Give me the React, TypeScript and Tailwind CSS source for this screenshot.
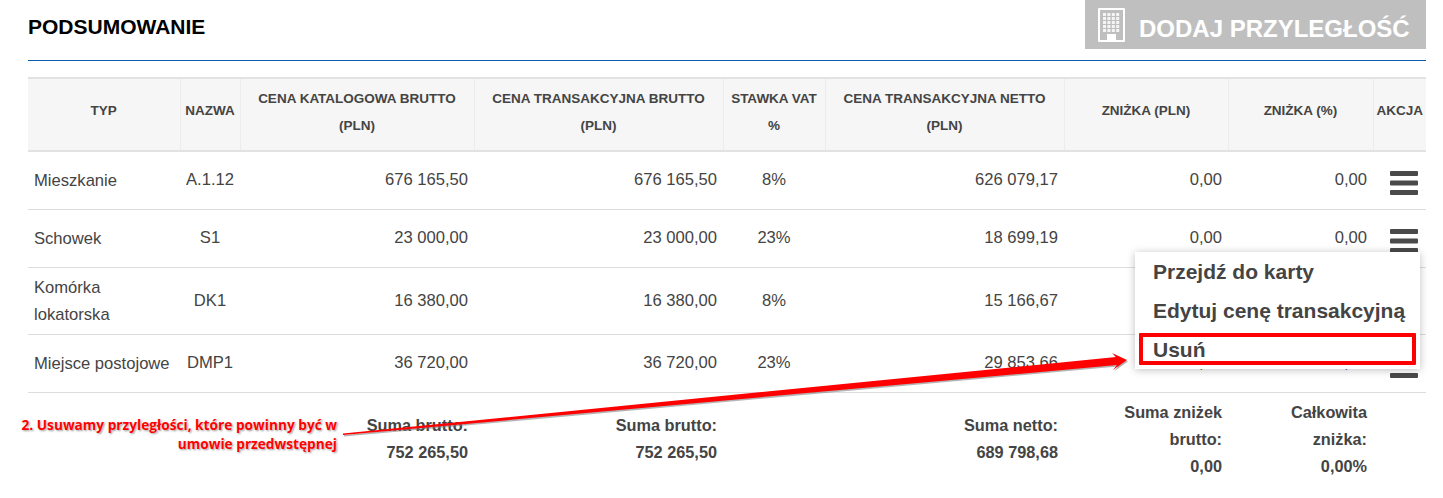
const F = "[font-family:'Liberation_Sans',Arial,sans-serif]";
const widths = [152, 60, 234, 249, 102, 239, 164, 145, 53];
const heads: [string, string?][] = [
  ["TYP"], ["NAZWA"], ["CENA KATALOGOWA BRUTTO", "(PLN)"], ["CENA TRANSAKCYJNA BRUTTO", "(PLN)"],
  ["STAWKA VAT", "%"], ["CENA TRANSAKCYJNA NETTO", "(PLN)"], ["ZNIŻKA (PLN)"], ["ZNIŻKA (%)"], ["AKCJA"],
];
const rows = [
  ["Mieszkanie", "A.1.12", "676 165,50", "676 165,50", "8%", "626 079,17", "0,00", "0,00"],
  ["Schowek", "S1", "23 000,00", "23 000,00", "23%", "18 699,19", "0,00", "0,00"],
  ["Komórka lokatorska", "DK1", "16 380,00", "16 380,00", "8%", "15 166,67", "0,00", "0,00"],
  ["Miejsce postojowe", "DMP1", "36 720,00", "36 720,00", "23%", "29 853,66", "0,00", "0,00"],
];
const heights = ["h-[58px]", "h-[58px]", "h-[67px]", "h-[58px]"];

function Bars() {
  return (
    <svg width="28" height="24" viewBox="0 0 28 24" className="block mx-auto" fill="#4a4a4a">
      <rect x="0" y="0" width="28" height="5" rx="1" />
      <rect x="0" y="9.5" width="28" height="5" rx="1" />
      <rect x="0" y="19" width="28" height="5" rx="1" />
    </svg>
  );
}

function Building() {
  return (
    <svg width="27" height="34" viewBox="0 0 27 34" className="block shrink-0" fill="#ffffff">
      <path fillRule="evenodd" d="M1 0h25a1 1 0 0 1 1 1v32a1 1 0 0 1-1 1H1a1 1 0 0 1-1-1V1a1 1 0 0 1 1-1zM2 2v30h7v-6h9v6h7V2z" />
      <g opacity="0.85">
        {[5, 9, 13, 17, 21].map((y) =>
          [5, 9.4, 13.8, 18.2].map((x) => <rect key={`${x}-${y}`} x={x} y={y} width="3" height="3" />)
        )}
      </g>
    </svg>
  );
}

function Sum({ label, value }: { label: string; value: string }) {
  return (
    <div className="leading-[27px] text-right font-bold text-[16.3px]">
      <div>{label}</div>
      <div>{value}</div>
    </div>
  );
}

export default function App() {
  return (
    <div className={`${F} relative w-[1443px] h-[498px] overflow-hidden bg-white text-[#444444] text-[16.6px]`}>
      <div className="pl-[28px] w-[1426px]">
        <div className="flex justify-between h-[61px] border-b border-[#0a5eab]">
          <h1 className="font-bold text-[21px] text-black pt-[13px] leading-[27px]">PODSUMOWANIE</h1>
          <div className="flex items-start gap-[14px] w-[341px] h-[49px] bg-[#bfbfbf] pl-[13px] pt-[8px] text-white font-bold text-[24px]">
            <Building />
            <span className="pt-[7px] leading-[28px]">DODAJ PRZYLEGŁOŚĆ</span>
          </div>
        </div>
        <table className="mt-[16px] table-fixed border-collapse w-[1398px]">
          <colgroup>
            {widths.map((w, i) => (
              <col key={i} style={{ width: w }} />
            ))}
          </colgroup>
          <thead>
            <tr className="h-[73px] bg-[#f6f6f6] border-y-2 border-[#e2e2e2]">
              {heads.map(([a, b], i) => (
                <th key={i} className={`px-0 ${b ? "pb-[5px]" : "pb-[8px]"} text-center font-bold text-[13.5px] leading-[27px] border-x border-[#ececec] first:border-l-0 last:border-r-0 whitespace-nowrap`}>
                  <div>{a}</div>
                  {b && <div>{b}</div>}
                </th>
              ))}
            </tr>
          </thead>
          <tbody>
            {rows.map((r, ri) => (
              <tr key={ri} className={`${heights[ri]} border-b border-[#dddddd]`}>
                <td className="px-[6px] leading-[27px]">{r[0]}</td>
                <td className="pt-[1px] text-center">{r[1]}</td>
                <td className="px-[6px] pt-[1px] text-right">{r[2]}</td>
                <td className="px-[6px] pt-[1px] text-right">{r[3]}</td>
                <td className="pt-[1px] text-center">{r[4]}</td>
                <td className="px-[6px] pt-[1px] text-right">{r[5]}</td>
                <td className="px-[6px] pt-[1px] text-right">{r[6]}</td>
                <td className="px-[6px] pt-[1px] text-right">{r[7]}</td>
                <td className="pl-[9px] pt-[6px]"><Bars /></td>
              </tr>
            ))}
            <tr className="align-top">
              <td className="pt-[6px]" />
              <td />
              <td className="px-[6px] pt-[19px]"><Sum label="Suma brutto:" value="752 265,50" /></td>
              <td className="px-[6px] pt-[19px]"><Sum label="Suma brutto:" value="752 265,50" /></td>
              <td />
              <td className="px-[6px] pt-[19px]"><Sum label="Suma netto:" value="689 798,68" /></td>
              <td className="px-[6px] pt-[6px] font-bold text-[16.3px]"><div className="leading-[27px] text-right">Suma zniżek<br />brutto:<br />0,00</div></td>
              <td className="px-[6px] pt-[6px] font-bold text-[16.3px]"><div className="leading-[27px] text-right">Całkowita<br />zniżka:<br />0,00%</div></td>
              <td />
            </tr>
          </tbody>
        </table>
      </div>

      <div className="absolute left-[1135px] top-[252px] w-[285px] h-[117px] bg-white shadow-[0_1px_8px_rgba(0,0,0,0.25)] font-bold text-[21px] text-[#444444] pl-[18px] leading-[39px]">
        <div>Przejdź do karty</div>
        <div>Edytuj cenę transakcyjną</div>
        <div>Usuń</div>
      </div>
      <div className="absolute left-[1139px] top-[333px] w-[277px] h-[32px] border-[4px] border-[#ff0000] rounded-[1px]" />

      <svg className="absolute left-0 top-0 pointer-events-none" width="1443" height="498" viewBox="0 0 1443 498">
        <path transform="translate(1 1.5)" d="M343 433.5 L1116 357 L1112 353 L1127 360 L1113 370 L1117 365 L343 435 Z" fill="#777777" opacity="0.55" />
        <path d="M343 433.5 L1116 357 L1112 353 L1127 360 L1113 370 L1117 365 L343 435 Z" fill="#ff0000" />
      </svg>

      <div className="absolute right-[1106px] top-[415px] w-[330px] text-right font-['Open_Sans',sans-serif] font-bold text-[13.7px] leading-[19px] text-[#ff0000] [text-shadow:0_0_2px_#fff,1px_1px_2px_#888]">
        2. Usuwamy przyległości, które powinny być w<br />umowie przedwstępnej
      </div>
    </div>
  );
}
